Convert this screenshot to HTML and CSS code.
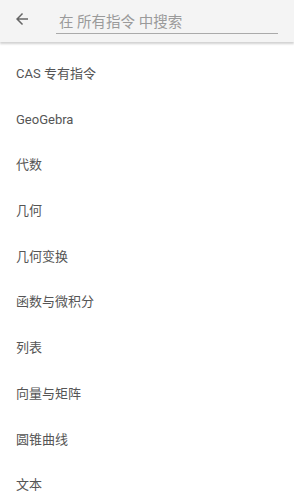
FILE: index.html
```html
<!DOCTYPE html>
<html lang="zh">
<head>
<meta charset="utf-8">
<link rel="stylesheet" href="styles.css">
</head>
<body>
<div class="page">
  <header class="topbar">
    <svg class="back" width="18" height="18" viewBox="0 0 24 24"><path d="M20 11H7.83l5.59-5.59L12 4l-8 8 8 8 1.41-1.41L7.83 13H20v-2z" fill="#666"/></svg>
    <div class="search">在 所有指令 中搜索</div>
  </header>
  <ul class="list">
    <li>CAS 专有指令</li>
    <li>GeoGebra</li>
    <li>代数</li>
    <li>几何</li>
    <li>几何变换</li>
    <li>函数与微积分</li>
    <li>列表</li>
    <li>向量与矩阵</li>
    <li>圆锥曲线</li>
    <li>文本</li>
  </ul>
</div>
</body>
</html>
```
FILE: styles.css
```css
html, body { margin: 0; padding: 0; background: #fff; }
body { font-family: Roboto, "Noto Sans CJK SC", sans-serif; overflow: hidden; }
.page { width: 294px; height: 500px; overflow: hidden; }
.topbar {
  height: 42px;
  background: #f4f4f4;
  display: flex;
  align-items: flex-start;
  box-shadow: 0 2px 2px rgba(0,0,0,0.18);
  position: relative;
}
.back { margin: 10px 0 0 13px; flex: none; }
.search {
  margin: 10px 0 0 25px;
  width: 219px;
  height: 23px;
  border-bottom: 1px solid #aaa;
  color: #9a9a9a;
  font-size: 14.5px;
  line-height: 26px;
  padding-left: 3px;
  box-sizing: content-box;
  overflow: hidden;
}
.list { list-style: none; margin: 0; padding: 0; }
.list li {
  height: 45.7px;
  line-height: 45.7px;
  padding-left: 16px;
  font-size: 13px;
  color: #555;
}
.list li:first-child { margin-top: 9px; }
```
